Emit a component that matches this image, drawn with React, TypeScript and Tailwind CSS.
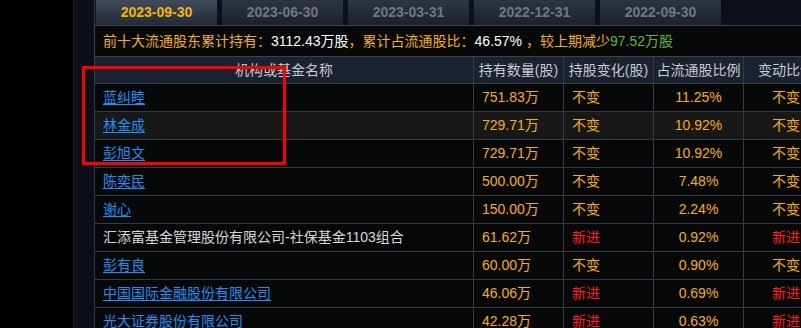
import React from "react";

const font = { fontFamily: '"Liberation Sans", "Noto Sans CJK SC", sans-serif' };

type Row = {
  name: string;
  link: boolean;
  qty: string;
  change: string;
  pct: string;
  chg2: string;
  hl?: boolean;
};

const rows: Row[] = [
  { name: "蓝纠睦", link: true, qty: "751.83万", change: "不变", pct: "11.25%", chg2: "不变" },
  { name: "林金成", link: true, qty: "729.71万", change: "不变", pct: "10.92%", chg2: "不变", hl: true },
  { name: "彭旭文", link: true, qty: "729.71万", change: "不变", pct: "10.92%", chg2: "不变" },
  { name: "陈奕民", link: true, qty: "500.00万", change: "不变", pct: "7.48%", chg2: "不变" },
  { name: "谢心", link: true, qty: "150.00万", change: "不变", pct: "2.24%", chg2: "不变" },
  { name: "汇添富基金管理股份有限公司-社保基金1103组合", link: false, qty: "61.62万", change: "新进", pct: "0.92%", chg2: "新进" },
  { name: "彭有良", link: true, qty: "60.00万", change: "不变", pct: "0.90%", chg2: "不变" },
  { name: "中国国际金融股份有限公司", link: true, qty: "46.06万", change: "新进", pct: "0.69%", chg2: "新进" },
  { name: "光大证券股份有限公司", link: true, qty: "42.28万", change: "新进", pct: "0.63%", chg2: "新进" },
];

const tabs = ["2023-09-30", "2023-06-30", "2023-03-31", "2022-12-31", "2022-09-30"];

function chColor(v: string) {
  return v === "新进" ? "text-[#ff1a1a]" : "text-[#f7b000]";
}

export default function App() {
  return (
    <div className="relative w-[801px] h-[328px] overflow-hidden bg-black flex text-[14px]" style={font}>
      <div className="w-[73px] shrink-0 bg-black" />
      <div className="w-[21px] shrink-0 bg-[#0b0f17] border-l border-[#1c222c]" />
      <div className="flex-1 min-w-0 flex flex-col overflow-hidden">
        {/* tabs */}
        <div className="h-[25px] shrink-0 bg-[#0c1019] flex gap-[5px] pl-px border-l border-[#323a46]">
          {tabs.map((t, i) => (
            <div
              key={t}
              className={
                "w-[121px] shrink-0 flex items-center justify-center font-bold text-[14px] " +
                (i === 0
                  ? "bg-gradient-to-b from-[#404a5c] to-[#242b37] text-[#f7b500]"
                  : "bg-gradient-to-b from-[#2d3543] to-[#1c222c] text-[#71767e]")
              }
            >
              {t}
            </div>
          ))}
        </div>
        {/* summary */}
        <div className="h-[31px] shrink-0 bg-[#070808] border-t border-l border-[#3a4250] flex items-center pl-[8px] whitespace-nowrap text-[#f7b000]">
          <span>前十大流通股东累计持有：</span>
          <span className="text-white">3112.43</span>
          <span className="text-white">万股</span>
          <span>，累计占流通股比：</span>
          <span className="text-white">46.57%</span>
          <span>&nbsp;，较上期减少</span>
          <span className="text-[#5cb82e]">97.52万股</span>
        </div>
        {/* header */}
        <div className="h-[28px] shrink-0 bg-[#1a2130] border-t border-b border-l border-[#3a4250] flex text-[#c8cacd] whitespace-nowrap">
          <div className="w-[379px] shrink-0 border-r border-[#323a46] flex items-center justify-center">机构或基金名称</div>
          <div className="w-[90px] shrink-0 border-r border-[#323a46] flex items-center justify-center">持有数量(股)</div>
          <div className="w-[90px] shrink-0 border-r border-[#323a46] flex items-center justify-center">持股变化(股)</div>
          <div className="w-[90px] shrink-0 border-r border-[#323a46] flex items-center justify-center">占流通股比例</div>
          <div className="w-[84px] shrink-0 flex items-center justify-center">变动比例</div>
        </div>
        {rows.map((r) => (
          <div
            key={r.name}
            className={
              "h-[28px] shrink-0 border-b border-l border-[#323a46] flex whitespace-nowrap " +
              (r.hl ? "bg-[#181818]" : "bg-[#070909]")
            }
          >
            <div className="w-[379px] shrink-0 border-r border-[#323a46] flex items-center pl-[8px]">
              {r.link ? (
                <span className="text-[#1890f5] underline underline-offset-2">{r.name}</span>
              ) : (
                <span className="text-[#d6d6d6]">{r.name}</span>
              )}
            </div>
            <div className="w-[90px] shrink-0 border-r border-[#323a46] flex items-center pl-[8px] text-[#f7b000]">{r.qty}</div>
            <div className={"w-[90px] shrink-0 border-r border-[#323a46] flex items-center pl-[8px] " + chColor(r.change)}>{r.change}</div>
            <div className="w-[90px] shrink-0 border-r border-[#323a46] flex items-center justify-center text-[#f7b000]">{r.pct}</div>
            <div className={"w-[84px] shrink-0 flex items-center justify-center " + chColor(r.chg2)}>{r.chg2}</div>
          </div>
        ))}
      </div>
      <div className="absolute left-[82px] top-[66px] w-[204px] h-[99px] border-[3px] border-[#ff0000] pointer-events-none" />
    </div>
  );
}
